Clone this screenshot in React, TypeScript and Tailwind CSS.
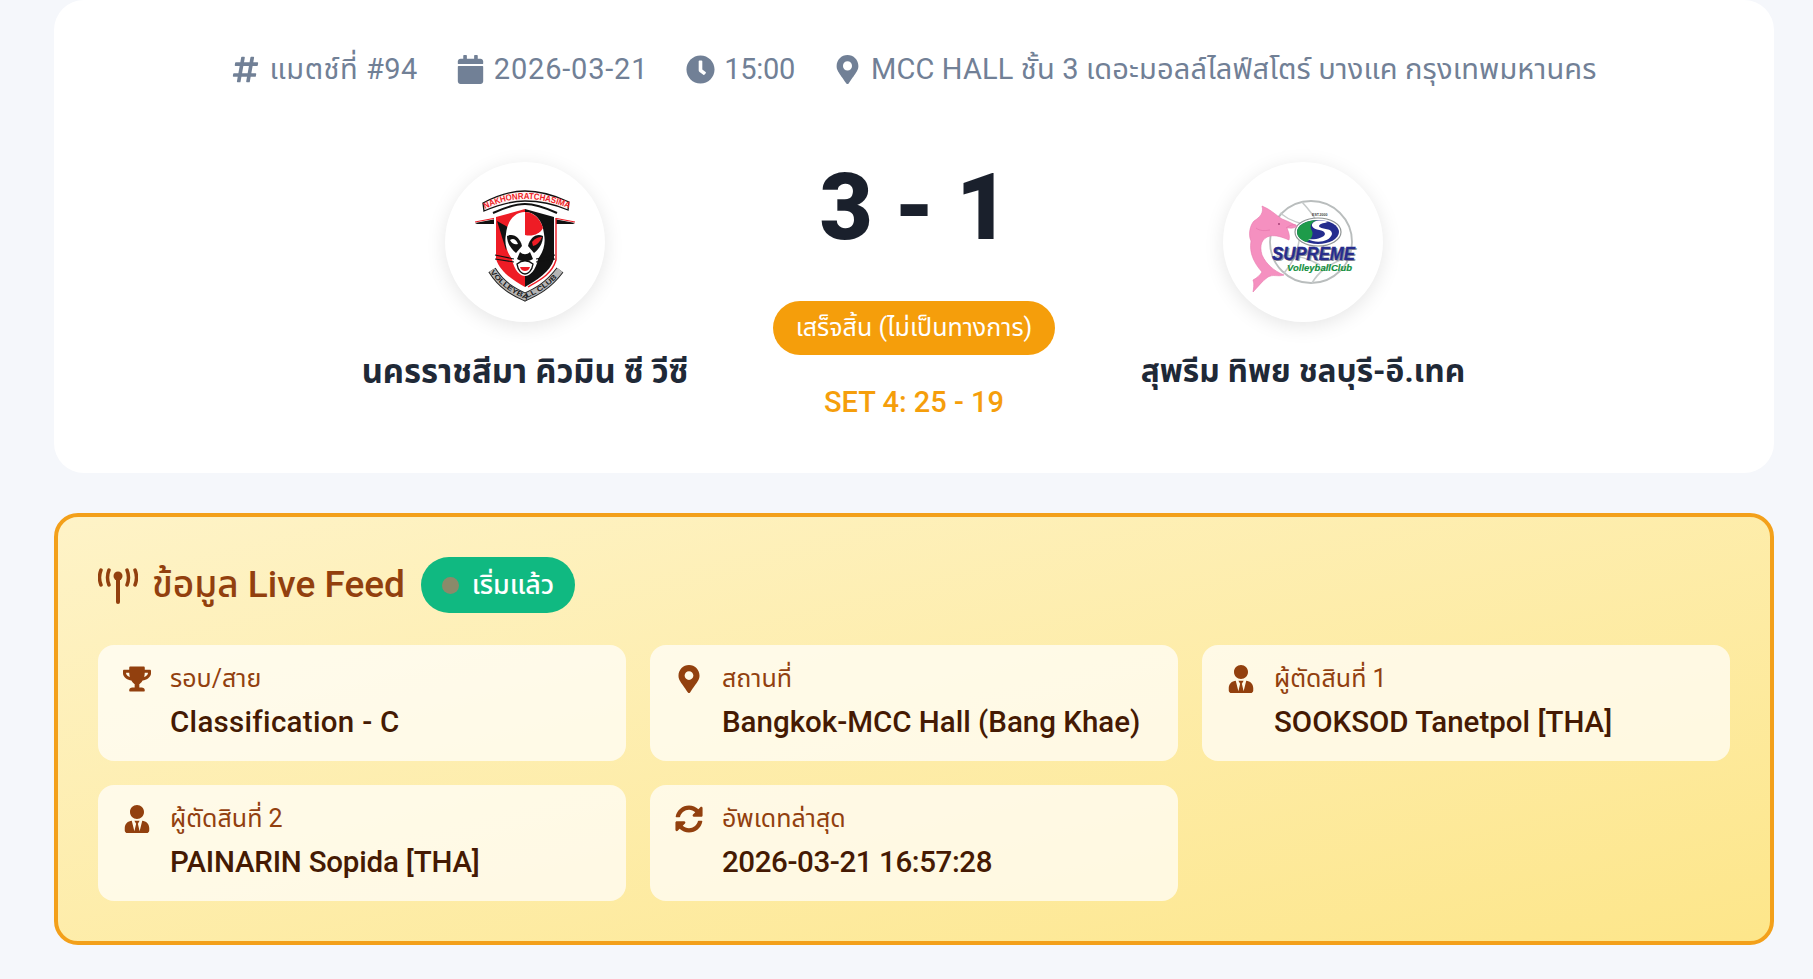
import type { ReactNode } from 'react';
import { FaHashtag, FaCalendar, FaClock, FaMapMarkerAlt, FaTrophy, FaUserTie, FaSyncAlt } from 'react-icons/fa';

const font = "font-['Roboto','Noto_Sans_Thai','Noto_Sans','Liberation_Sans',sans-serif]";

const LiveIcon = () => (
  <svg viewBox="0 0 40 37" className="w-[40px] h-[37px] shrink-0" fill="none" stroke="#92400e" strokeLinecap="round">
    <path d="M20 12V35" strokeWidth="4" />
    <circle cx="20" cy="9" r="4.5" fill="#92400e" stroke="none" />
    <path d="M11 3C9 8 9 13 11 18M3 3C1 8 1 13 3 18M29 3C31 8 31 13 29 18M37 3C39 8 39 13 37 18" strokeWidth="3.5" />
  </svg>
);

const KoratLogo = () => (
  <svg viewBox="0 0 110 120" className="w-[110px] h-[120px] mt-[4px]">
    {/* wings */}
    <path d="M5 39L26 35V40H16L7 40Z M105 39L84 35V40H94L103 40Z" fill="#111" />
    <path d="M5 38L26 34M105 38L84 34" stroke="#ee1c25" strokeWidth="1.2" />
    {/* shield */}
    <path d="M24 32L55 23L86 32V76C82 90 68 98 55 105C42 98 28 90 24 76Z" fill="#fff" />
    <path d="M26 33L55 25V103C43 96 30 88 26 75Z" fill="#ee1c25" />
    <path d="M55 25L84 33V75C80 88 67 96 55 103Z" fill="#111" />
    <path d="M86 34L86 76C82 90 70 96 58 103" fill="none" stroke="#ee1c25" strokeWidth="1.4" />
    <path d="M23 29C34 24 44 20 55 20C66 20 76 24 87 29" fill="none" stroke="#111" strokeWidth="2" />
    {/* ears and head */}
    <path d="M27 37L45 47L36 66Z" fill="#111" />
    <path d="M83 37L65 47L74 66Z" fill="#111" />
    <path d="M55 28C66 28 73 38 74 50C76 60 73 68 68 75C66 86 60 92 55 92C50 92 44 86 42 75C37 68 34 60 36 50C37 38 44 28 55 28Z" fill="#fff" />
    <path d="M55 28C63 28 70 34 73 44C70 50 62 53 55 51Z" fill="#ee1c25" />
    <path d="M37 52C44 49 50 54 52 62L46 69C41 65 37 59 37 52Z" fill="#111" />
    <path d="M73 52C66 49 60 54 58 62L64 69C69 65 73 59 73 52Z" fill="#111" />
    <path d="M62 58C65 54 69 53 72 53C70 58 67 61 63 62Z" fill="#ee1c25" />
    <path d="M40 56C43 54 46 55 48 60C45 61 42 60 40 56Z" fill="#fff" />
    <path d="M50 68C53 71 57 71 60 68L63 75C58 78 52 78 47 75Z" fill="#111" />
    <path d="M47 80C52 76 58 76 63 80C62 87 58 90 55 90C52 90 48 87 47 80Z" fill="#fff" stroke="#111" strokeWidth="1.4" />
    <path d="M50 83H60C59 86 57 87 55 87C53 87 51 86 50 83Z" fill="#ee1c25" />
    <path d="M25 71L44 75M25 75L44 78M85 71L66 75M85 75L66 78" stroke="#111" strokeWidth="1.1" />
    {/* top banner */}
    <path d="M13 19C28 11 42 7 55 7C68 7 84 11 99 18L98 26C84 20 68 17 55 17C42 17 28 21 14 27Z" fill="#fff3f3" stroke="#111" strokeWidth="1.3" />
    <path id="koratTop" d="M15 25C29 18 42 15 55 15C68 15 83 18 98 24" fill="none" />
    <text fontSize="8.8" fontWeight="900" fill="#ee1c25" fontFamily="Liberation Sans">
      <textPath href="#koratTop" textLength="87" lengthAdjust="spacingAndGlyphs">NAKHONRATCHASIMA</textPath>
    </text>
    {/* bottom ribbon */}
    <path d="M22 86C32 102 44 108 55 113C66 108 78 102 90 86" fill="none" stroke="#222" strokeWidth="8.5" />
    <path d="M22 86C32 102 44 108 55 113C66 108 78 102 90 86" fill="none" stroke="#b5b5b5" strokeWidth="6.5" />
    <path id="koratBottom" d="M20 88C31 103 44 110 55 115C66 110 80 103 92 88" fill="none" />
    <text fontSize="7" fontWeight="700" fill="#222" fontFamily="Liberation Sans">
      <textPath href="#koratBottom" textLength="84" lengthAdjust="spacingAndGlyphs">VOLLEYBALL CLUB</textPath>
    </text>
  </svg>
);

const SupremeLogo = () => (
  <svg viewBox="0 0 130 100" className="w-[130px] h-[100px] mt-[6px] ml-[4px]">
    {/* ball */}
    <circle cx="71" cy="47" r="41" fill="#fff" stroke="#b9bdbd" strokeWidth="1.8" />
    <path d="M62 7C74 20 82 30 84 58M40 18C50 26 60 30 76 30M44 78C54 66 58 56 60 40M72 88C78 78 86 70 108 62M34 62C52 58 66 62 80 70" fill="none" stroke="#c6caca" strokeWidth="1.6" />
    {/* badge */}
    <ellipse cx="78" cy="37" rx="23" ry="14" fill="#fff" stroke="#8f9494" strokeWidth="1.2" />
    <ellipse cx="78" cy="37" rx="21" ry="12" fill="#232c8e" />
    <path d="M57 37C57 30 66 25 78 25C71 27 69 31 72 36C74 40 70 46 66 47C61 45 57 42 57 37Z" fill="#1e9b4a" />
    <path d="M88 27C80 24 71 26 72 31C74 36 85 34 85 39C84 43 75 45 68 44C76 49 90 47 92 39C92 32 80 35 79 31C80 28 85 28 88 27Z" fill="#fff" />
    <text x="72" y="21" fontSize="3.6" fontWeight="700" fill="#444" fontFamily="Liberation Sans">EST.2000</text>
    {/* dolphin */}
    <path d="M22 11C30 14 36 20 42 24C48 26 53 29 57 31C54 34 50 33 47 33C49 38 50 41 49 45C42 42 36 40 30 41C22 43 19 50 22 60C26 69 34 76 44 80C38 82 33 79 28 82C22 86 18 92 13 97C14 91 14 88 13 85C17 83 20 80 22 77C14 68 9 58 11 46C8 40 10 30 14 26C20 22 24 18 22 11Z" fill="#f590c0" stroke="#e778ad" strokeWidth="0.6" />
    <path d="M46 33C50 30 54 29 56 30" fill="none" stroke="#e778ad" strokeWidth="0.8" />
    <path d="M16 33C20 36 24 36 30 35" fill="none" stroke="#e778ad" strokeWidth="0.8" />
    <circle cx="39" cy="29" r="0.9" fill="#a03a70" />
    {/* wordmark */}
    <text x="33.5" y="65.5" fontSize="18" fontWeight="900" fontStyle="italic" fill="#9a9a9a" fontFamily="Liberation Sans" textLength="83" lengthAdjust="spacingAndGlyphs">SUPREME</text>
    <text x="32" y="64.5" fontSize="18" fontWeight="900" fontStyle="italic" fill="#262c8e" stroke="#262c8e" strokeWidth="0.4" fontFamily="Liberation Sans" textLength="83" lengthAdjust="spacingAndGlyphs">SUPREME</text>
    <text x="47" y="76" fontSize="9" fontWeight="900" fontStyle="italic" fill="#14903e" stroke="#14903e" strokeWidth="0.15" fontFamily="Liberation Sans" textLength="65" lengthAdjust="spacingAndGlyphs">VolleyballClub</text>
  </svg>
);

const Team = ({ name, logo, nameClass }: { name: string; logo: ReactNode; nameClass: string }) => (
  <div className="flex flex-col items-center w-[398px]">
    <div className="w-[160px] h-[160px] rounded-full bg-white shadow-[0_4px_20px_rgba(0,0,0,0.1)] flex items-center justify-center">
      {logo}
    </div>
    <div className={`mt-[25px] leading-[50px] font-bold text-[#1f2937] whitespace-nowrap ${nameClass}`}>{name}</div>
  </div>
);

const MetaItem = ({ icon, text, textClass }: { icon: ReactNode; text: string; textClass: string }) => (
  <span className="flex items-center gap-[9px] whitespace-nowrap">
    {icon}
    <span className={textClass}>{text}</span>
  </span>
);

const InfoCard = ({ icon, label, value, valueClass = '' }: { icon: ReactNode; label: string; value: string; valueClass?: string }) => (
  <div className="h-[116px] rounded-[16px] bg-white/70 px-[24px] pt-[16px] flex gap-[18px]">
    <div className="w-[30px] pt-[4px] flex justify-center text-[#92400e] text-[28px] shrink-0">{icon}</div>
    <div>
      <div className="text-[25px] leading-[36px] text-[#92400e]">{label}</div>
      <div className={`mt-[3px] text-[29.5px] leading-[44px] font-medium text-[#451a03] whitespace-nowrap ${valueClass}`}>{value}</div>
    </div>
  </div>
);

export default function App() {
  return (
    <div className={`${font} min-h-[979px] bg-[#f5f7fb] pl-[54px] pr-[39px] overflow-hidden`}>
      <section className="h-[473px] bg-white rounded-[30px] pt-[44px]">
        <div className="flex justify-center items-center gap-[38px] text-[29px] leading-[50px] text-[#718096]">
          <MetaItem icon={<FaHashtag />} text="แมตช์ที่ #94" textClass="tracking-[0.5px]" />
          <MetaItem icon={<FaCalendar />} text="2026-03-21" textClass="tracking-[0.8px]" />
          <MetaItem icon={<FaClock />} text="15:00" textClass="tracking-[-0.3px]" />
          <MetaItem icon={<FaMapMarkerAlt />} text="MCC HALL ชั้น 3 เดอะมอลล์ไลฟ์สโตร์ บางแค กรุงเทพมหานคร" textClass="tracking-[0.14px]" />
        </div>
        <div className="mt-[68px] flex justify-center items-start gap-[40px]">
          <Team name="นครราชสีมา คิวมิน ซี วีซี" logo={<KoratLogo />} nameClass="text-[32.8px]" />
          <div className="flex flex-col items-center w-[300px] -mt-[14px]">
            <div className="text-[92px] leading-[120px] tracking-[-1px] font-black text-[#1a202c] whitespace-nowrap">3 - 1</div>
            <div className="mt-[33px] h-[54px] w-[282px] rounded-full bg-[#f59e0b] text-white text-[25px] flex items-center justify-center whitespace-nowrap">เสร็จสิ้น (ไม่เป็นทางการ)</div>
            <div className="mt-[26px] text-[29px] leading-[42px] font-medium text-[#f59e0b] whitespace-nowrap">SET 4: 25 - 19</div>
          </div>
          <Team name="สุพรีม ทิพย ชลบุรี-อี.เทค" logo={<SupremeLogo />} nameClass="text-[31.7px]" />
        </div>
      </section>

      <section className="mt-[40px] h-[432px] rounded-[24px] border-[4px] border-[#f3a01a] bg-gradient-to-br from-[#fef3c7] to-[#fde68a] p-[40px]">
        <div className="flex items-center gap-[16px] h-[56px]">
          <div className="flex items-center gap-[14px] text-[37px] font-medium text-[#92400e] whitespace-nowrap">
            <LiveIcon />
            ข้อมูล Live Feed
          </div>
          <div className="h-[56px] w-[154px] rounded-full bg-[#10b981] flex items-center justify-center gap-[13px] text-white text-[26.8px] font-medium">
            <span className="w-[17px] h-[17px] rounded-full bg-[#8a8a6a]" />
            เริ่มแล้ว
          </div>
        </div>
        <div className="mt-[32px] grid grid-cols-3 gap-[24px]">
          <InfoCard icon={<FaTrophy />} label="รอบ/สาย" value="Classification - C" valueClass="tracking-[0.3px]" />
          <InfoCard icon={<FaMapMarkerAlt />} label="สถานที่" value="Bangkok-MCC Hall (Bang Khae)" />
          <InfoCard icon={<FaUserTie />} label="ผู้ตัดสินที่ 1" value="SOOKSOD Tanetpol [THA]" />
          <InfoCard icon={<FaUserTie />} label="ผู้ตัดสินที่ 2" value="PAINARIN Sopida [THA]" valueClass="tracking-[-0.2px]" />
          <InfoCard icon={<FaSyncAlt />} label="อัพเดทล่าสุด" value="2026-03-21 16:57:28" valueClass="tracking-[-0.4px]" />
        </div>
      </section>
    </div>
  );
}
